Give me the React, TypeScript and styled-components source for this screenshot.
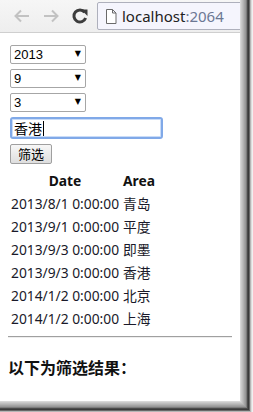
import styled, { createGlobalStyle } from 'styled-components';

const GlobalStyle = createGlobalStyle`
    html, body {
        margin: 0;
        padding: 0;
        background: #ffffff;
    }
    body {
        width: 253px;
        height: 412px;
        overflow: hidden;
    }
`;

// frame shades, from the window edge outwards
const frame = ['#d8d8d8', '#cacaca', '#bebebe', '#b2b2b2', '#a4a4a4', '#989898', '#7c7c7c', '#4c4c4c', '#3a3a3a', '#686868', '#b6b6b6', '#dcdcdc', '#f0f0f0'];

const frameShadow = [
    ...frame.map((c, i) => `${i + 1}px 0 0 ${c}, 0 ${i + 1}px 0 ${c}`),
    ...frame.map((c, i) => `${i + 1}px ${i + 1}px 0 ${c}`),
].join(', ');

const Screen = styled.div`
    width: 253px;
    height: 412px;
    background: #ffffff;
`;

const Window = styled.div`
    width: 240px;
    height: 401px;
    background: #ffffff;
    overflow: hidden;
    display: flex;
    flex-direction: column;
    box-shadow: ${frameShadow};
`;

const Toolbar = styled.div`
    height: 32px;
    flex-shrink: 0;
    display: flex;
    align-items: center;
    background: linear-gradient(#f6f6f6, #eeeeee);
    border-bottom: 1px solid #cfcfcf;
    padding-left: 8px;
`;

const NavButton = styled.div`
    width: 28px;
    height: 24px;
    display: flex;
    align-items: center;
    justify-content: center;
    margin-right: 1px;
`;

const UrlBox = styled.div`
    flex: 1;
    height: 26px;
    margin-left: 2px;
    margin-right: -6px;
    display: flex;
    align-items: center;
    gap: 5px;
    padding-left: 7px;
    background: #f5f5fd;
    border: 1px solid #aeb0bc;
    border-radius: 2px;
    font-family: "Noto Sans", "Open Sans", sans-serif;
    font-size: 15px;
    color: #222222;
`;

const Port = styled.span`
    color: #6c7894;
`;

const Page = styled.div`
    flex: 1;
    padding: 12px 8px 0 8px;
    display: flex;
    flex-direction: column;
    align-items: flex-start;
`;

const Form = styled.form`
    display: flex;
    flex-direction: column;
    align-items: flex-start;
    gap: 5px;
    margin: 0 0 0 2px;
`;

const SelectWrap = styled.span`
    position: relative;
    display: block;
    &::after {
        content: '▼';
        position: absolute;
        right: 5px;
        top: 4px;
        font-size: 8px;
        color: #000000;
        font-family: "DejaVu Sans", sans-serif;
        pointer-events: none;
    }
`;

const Select = styled.select`
    appearance: none;
    width: 76px;
    height: 19px;
    padding: 0 0 0 3px;
    border: 1px solid #a6a6a6;
    border-radius: 2px;
    background: #ffffff;
    font-family: "Liberation Sans", Arial, sans-serif;
    font-size: 13px;
    color: #000000;
    display: block;
`;

const Field = styled.div`
    width: 153px;
    height: 22px;
    box-sizing: border-box;
    border: 2px solid #80a9e8;
    border-radius: 3px;
    box-shadow: inset 0 0 0 1px #c9dcf8;
    display: flex;
    align-items: center;
    padding-left: 2px;
    font-family: "Noto Sans CJK SC", sans-serif;
    font-size: 14px;
    color: #000000;
`;

const Caret = styled.span`
    display: inline-block;
    width: 1px;
    height: 15px;
    background: #000000;
    margin-left: 1px;
`;

const Button = styled.button`
    height: 20px;
    width: 42px;
    padding: 0;
    border: 1px solid #9f9f9f;
    border-radius: 2px;
    background: linear-gradient(#f7f7f7, #dedede);
    font-family: "Noto Sans CJK SC", sans-serif;
    font-size: 13px;
    line-height: 16px;
    color: #000000;
`;

const Table = styled.table`
    margin-top: 4px;
    border-spacing: 2px;
    font-family: "Noto Sans", "Noto Sans CJK SC", sans-serif;
    font-size: 13.8px;
    color: #1a1a2a;
`;

const Th = styled.th`
    padding: 1px;
    line-height: 19px;
    font-weight: 700;
    text-align: center;
    color: #111111;
`;

const Td = styled.td`
    padding: 1px;
    line-height: 19px;
    white-space: nowrap;
`;

const Rule = styled.hr`
    width: 100%;
    margin: 5px 0 0 0;
    border: 0;
    border-top: 1px solid #a0a0a0;
    border-bottom: 1px solid #eeeeee;
`;

const Heading = styled.h3`
    margin: 18px 0 0 0;
    font-family: "Noto Sans CJK SC", sans-serif;
    font-size: 16px;
    font-weight: 700;
    line-height: 22px;
    color: #111111;
`;

const rows = [
    ['2013/8/1 0:00:00', '青岛'],
    ['2013/9/1 0:00:00', '平度'],
    ['2013/9/3 0:00:00', '即墨'],
    ['2013/9/3 0:00:00', '香港'],
    ['2014/1/2 0:00:00', '北京'],
    ['2014/1/2 0:00:00', '上海'],
];

const App = () => {
    return (
        <Screen>
            <GlobalStyle />
            <Window>
                <Toolbar>
                    <NavButton>
                        <svg width="18" height="16" viewBox="0 0 18 16">
                            <path d="M16 8H3 M8 2.5L2.5 8L8 13.5" fill="none" stroke="#c2c2c2" strokeWidth="2" />
                        </svg>
                    </NavButton>
                    <NavButton>
                        <svg width="18" height="16" viewBox="0 0 18 16">
                            <path d="M2 8H15 M10 2.5L15.5 8L10 13.5" fill="none" stroke="#c2c2c2" strokeWidth="2" />
                        </svg>
                    </NavButton>
                    <NavButton>
                        <svg width="18" height="18" viewBox="0 0 18 18">
                            <path d="M13.6 5.2A6 6 0 1 0 14.6 11" fill="none" stroke="#3c3c3c" strokeWidth="3" />
                            <path d="M10 2.5L16.5 2.5L16.5 9Z" fill="#3c3c3c" />
                        </svg>
                    </NavButton>
                    <UrlBox>
                        <svg width="12" height="15" viewBox="0 0 12 15">
                            <path d="M1.5 0.5H7.5L11 4V14.5H1.5Z M7.5 0.5V4H11" fill="#ffffff" stroke="#6a6a6a" strokeWidth="1" />
                        </svg>
                        <span>localhost<Port>:2064</Port></span>
                    </UrlBox>
                </Toolbar>
                <Page>
                    <Form>
                        <SelectWrap>
                            <Select defaultValue="2013">
                                <option>2013</option>
                                <option>2014</option>
                            </Select>
                        </SelectWrap>
                        <SelectWrap>
                            <Select defaultValue="9">
                                <option>9</option>
                            </Select>
                        </SelectWrap>
                        <SelectWrap>
                            <Select defaultValue="3">
                                <option>3</option>
                            </Select>
                        </SelectWrap>
                        <Field>
                            香港<Caret />
                        </Field>
                        <Button type="button">筛选</Button>
                    </Form>
                    <Table>
                        <thead>
                            <tr>
                                <Th>Date</Th>
                                <Th>Area</Th>
                            </tr>
                        </thead>
                        <tbody>
                            {rows.map(([date, area], index) => (
                                <tr key={`${date}-${index.toString()}`}>
                                    <Td>{date}</Td>
                                    <Td>{area}</Td>
                                </tr>
                            ))}
                        </tbody>
                    </Table>
                    <Rule />
                    <Heading>以下为筛选结果：</Heading>
                </Page>
            </Window>
        </Screen>
    );
};

export default App;
